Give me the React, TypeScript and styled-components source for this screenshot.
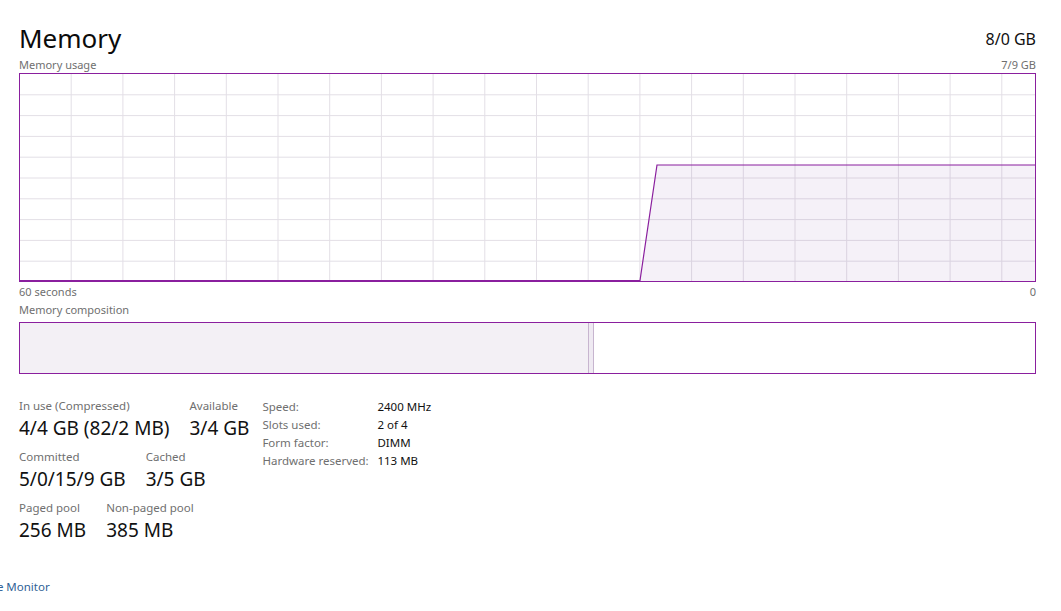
import { FC, Fragment } from 'react';
import styled, { createGlobalStyle } from 'styled-components';

const GlobalStyle = createGlobalStyle`
  html, body {
    margin: 0;
    padding: 0;
    background: #ffffff;
    overflow: hidden;
  }
  body {
    font-family: 'Noto Sans', 'Open Sans', sans-serif;
    color: #000000;
  }
`;

const Page = styled.div`
  width: 1061px;
  height: 611px;
  box-sizing: border-box;
  padding: 19px 25px 0 19px;
  display: flex;
  flex-direction: column;
  overflow: hidden;
`;

const HeaderRow = styled.div`
  display: flex;
  justify-content: space-between;
  align-items: flex-end;
`;

const Title = styled.h1`
  margin: 0;
  font-size: 26px;
  font-weight: 400;
  line-height: 38px;
  color: #0b0b0b;
`;

const Total = styled.span`
  font-size: 16px;
  line-height: 24px;
  margin-bottom: 6px;
  color: #111;
`;

const CaptionRow = styled.div<{ $gap?: number }>`
  display: flex;
  justify-content: space-between;
  font-size: 11px;
  line-height: 16px;
  color: #6f6f6f;
  margin-top: ${(p) => p.$gap ?? 0}px;
`;

const ChartBox = styled.div`
  height: 209px;
  border: 1px solid #8a1f9e;
  box-sizing: border-box;
  background: #ffffff;
`;

const ChartSvg = styled.svg`
  display: block;
  width: 100%;
  height: 100%;
`;

const CompositionBar = styled.div`
  height: 52px;
  margin-top: 4px;
  border: 1px solid #8a1f9e;
  box-sizing: border-box;
  display: flex;
`;

const Segment = styled.div<{ $width: number; $fill: string; $divider?: boolean }>`
  flex: 0 0 ${(p) => p.$width}px;
  background: ${(p) => p.$fill};
  border-right: ${(p) => (p.$divider ? '1px solid #c7b5cf' : 'none')};
`;

const Rest = styled.div`
  flex: 1;
  background: #ffffff;
`;

const Stats = styled.div`
  display: flex;
  align-items: flex-start;
  gap: 13px;
  margin-top: 24px;
`;

const StatColumn = styled.div`
  display: flex;
  flex-direction: column;
  gap: 7px;
`;

const StatRow = styled.div`
  display: flex;
  gap: 20px;
`;

const Stat = styled.div`
  display: flex;
  flex-direction: column;
`;

const StatLabel = styled.span`
  font-size: 11.5px;
  line-height: 16px;
  color: #6f6f6f;
`;

const StatValue = styled.span`
  font-size: 19px;
  line-height: 28px;
  color: #111;
  white-space: nowrap;
`;

const InfoTable = styled.div`
  display: grid;
  grid-template-columns: 115px auto;
  grid-auto-rows: 18px;
  font-size: 11.5px;
  line-height: 18px;
`;

const InfoKey = styled.span`
  color: #6f6f6f;
`;

const InfoValue = styled.span`
  color: #111;
`;

const Footer = styled.div`
  margin-top: auto;
  height: 32px;
  margin-left: -98px;
  display: flex;
  align-items: flex-start;
`;

const FooterLink = styled.a`
  font-size: 11.5px;
  line-height: 16px;
  color: #2f6296;
  text-decoration: none;
  white-space: nowrap;
`;

const W = 1015;
const H = 207;

const UsageChart: FC = () => {
  const cols = Array.from({ length: 19 }, (_, i) => (i + 1) * 51.7 - 0.5);
  const rows = Array.from({ length: 9 }, (_, i) => (i + 1) * 20.8);
  return (
    <ChartSvg viewBox={`0 0 ${W} ${H}`} preserveAspectRatio="none">
      {cols.map((x) => (
        <line key={`c${x}`} x1={x} y1={0} x2={x} y2={H} stroke="#e3dfe6" strokeWidth={1} />
      ))}
      {rows.map((y) => (
        <line key={`r${y}`} x1={0} y1={y} x2={W} y2={y} stroke="#e3dfe6" strokeWidth={1} />
      ))}
      <polygon points={`620,${H} 637,91 ${W},91 ${W},${H}`} fill="rgba(120, 60, 150, 0.07)" />
      <polyline
        points={`0,${H - 0.5} 620,${H - 0.5} 637,91 ${W},91`}
        fill="none"
        stroke="#8a1f9e"
        strokeWidth={1.2}
      />
    </ChartSvg>
  );
};

const stats = [
  [
    { label: 'In use (Compressed)', value: '4/4 GB (82/2 MB)' },
    { label: 'Available', value: '3/4 GB' },
  ],
  [
    { label: 'Committed', value: '5/0/15/9 GB' },
    { label: 'Cached', value: '3/5 GB' },
  ],
  [
    { label: 'Paged pool', value: '256 MB' },
    { label: 'Non-paged pool', value: '385 MB' },
  ],
];

const info = [
  ['Speed:', '2400 MHz'],
  ['Slots used:', '2 of 4'],
  ['Form factor:', 'DIMM'],
  ['Hardware reserved:', '113 MB'],
];

export default function App() {
  return (
    <>
      <GlobalStyle />
      <Page>
        <HeaderRow>
          <Title>Memory</Title>
          <Total>8/0 GB</Total>
        </HeaderRow>
        <CaptionRow>
          <span>Memory usage</span>
          <span>7/9 GB</span>
        </CaptionRow>
        <ChartBox>
          <UsageChart />
        </ChartBox>
        <CaptionRow $gap={2}>
          <span>60 seconds</span>
          <span>0</span>
        </CaptionRow>
        <CaptionRow $gap={2}>
          <span>Memory composition</span>
        </CaptionRow>
        <CompositionBar>
          <Segment $width={568} $fill="#f3f0f5" $divider />
          <Segment $width={4} $fill="#efeaf2" $divider />
          <Rest />
        </CompositionBar>
        <Stats>
          <StatColumn>
            {stats.map((row, i) => (
              <StatRow key={i}>
                {row.map((s) => (
                  <Stat key={s.label}>
                    <StatLabel>{s.label}</StatLabel>
                    <StatValue>{s.value}</StatValue>
                  </Stat>
                ))}
              </StatRow>
            ))}
          </StatColumn>
          <InfoTable>
            {info.map(([k, v]) => (
              <Fragment key={k}>
                <InfoKey>{k}</InfoKey>
                <InfoValue>{v}</InfoValue>
              </Fragment>
            ))}
          </InfoTable>
        </Stats>
        <Footer>
          <FooterLink href="#">Open Resource Monitor</FooterLink>
        </Footer>
      </Page>
    </>
  );
}
